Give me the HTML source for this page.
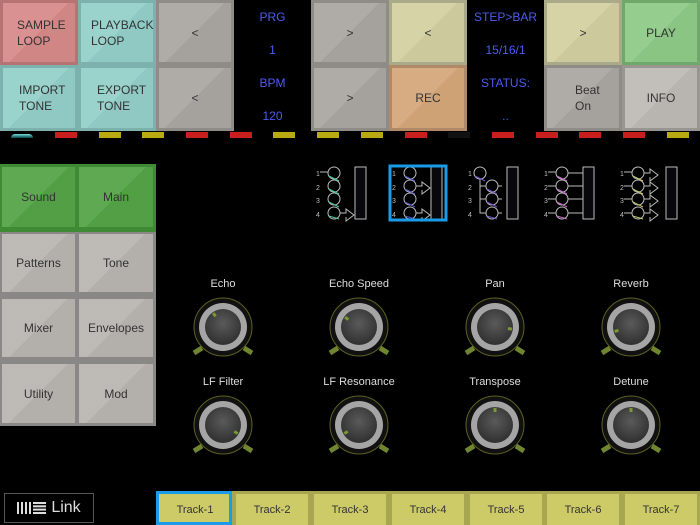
<!DOCTYPE html>
<html><head><meta charset="utf-8"><style>
*{margin:0;padding:0;box-sizing:border-box}
body{width:700px;height:525px;background:#000;position:relative;overflow:hidden;font-family:"Liberation Sans",sans-serif}
.c{position:absolute;display:flex;align-items:center;justify-content:center;text-align:center;font-size:12px;color:#333;line-height:16px}
.c>div{position:absolute;left:3px;top:3px;right:3px;bottom:3px;display:flex;align-items:center;justify-content:center;background-image:linear-gradient(135deg,rgba(255,255,255,.06) 50%,rgba(0,0,0,.03) 50%)}
.bl{position:absolute;color:#4b5cf0;font-size:12px;text-align:center}
.ind{position:absolute;top:132px;width:22px;height:6px}
.lab{position:absolute;color:#ddd;font-size:11px;text-align:center;width:120px}
.tr{position:absolute;top:491px;height:34px;width:78px;background:#a8a650;font-size:11px;color:#333}
.tr>div{position:absolute;left:3px;top:3px;right:3px;bottom:0;background:#cdca68;display:flex;align-items:center;justify-content:center}
</style></head><body>
<div class="c" style="left:0;top:0;width:78px;height:65px;background:#b77374"><div style="background-color:#d88a8a;justify-content:flex-start;padding-left:14px;text-align:left">SAMPLE<br>LOOP</div></div>
<div class="c" style="left:78px;top:0;width:78px;height:65px;background:#7cb1ae"><div style="background-color:#94cfc9;justify-content:flex-start;padding-left:10px;text-align:left">PLAYBACK<br>LOOP</div></div>
<div class="c" style="left:156px;top:0;width:78px;height:65px;background:#8f8c88"><div style="background-color:#aaa7a2">&lt;</div></div>
<div class="c" style="left:311px;top:0;width:78px;height:65px;background:#8f8c88"><div style="background-color:#aaa7a2">&gt;</div></div>
<div class="c" style="left:389px;top:0;width:78px;height:65px;background:#aaa98a"><div style="background-color:#d3d1a2">&lt;</div></div>
<div class="c" style="left:544px;top:0;width:78px;height:65px;background:#aaa98a"><div style="background-color:#d3d1a2">&gt;</div></div>
<div class="c" style="left:622px;top:0;width:78px;height:65px;background:#6fa86a"><div style="background-color:#8ecb88">PLAY</div></div>
<div class="c" style="left:0;top:65px;width:78px;height:66px;background:#7cb1ae"><div style="background-color:#94cfc9;justify-content:flex-start;padding-left:16px;text-align:left">IMPORT<br>TONE</div></div>
<div class="c" style="left:78px;top:65px;width:78px;height:66px;background:#7cb1ae"><div style="background-color:#94cfc9;justify-content:flex-start;padding-left:16px;text-align:left">EXPORT<br>TONE</div></div>
<div class="c" style="left:156px;top:65px;width:78px;height:66px;background:#8f8c88"><div style="background-color:#aaa7a2">&lt;</div></div>
<div class="c" style="left:311px;top:65px;width:78px;height:66px;background:#8f8c88"><div style="background-color:#aaa7a2">&gt;</div></div>
<div class="c" style="left:389px;top:65px;width:78px;height:66px;background:#b08a68"><div style="background-color:#d6a77a">REC</div></div>
<div class="c" style="left:544px;top:65px;width:78px;height:66px;background:#8f8c88"><div style="background-color:#aaa7a2;justify-content:flex-start;padding-left:28px;text-align:left">Beat<br>On</div></div>
<div class="c" style="left:622px;top:65px;width:78px;height:66px;background:#999691"><div style="background-color:#bebbb6">INFO</div></div>
<div class="bl" style="left:234px;top:10px;width:77px">PRG</div>
<div class="bl" style="left:234px;top:43px;width:77px">1</div>
<div class="bl" style="left:234px;top:76px;width:77px">BPM</div>
<div class="bl" style="left:234px;top:109px;width:77px">120</div>
<div class="bl" style="left:467px;top:10px;width:77px">STEP&gt;BAR</div>
<div class="bl" style="left:467px;top:43px;width:77px">15/16/1</div>
<div class="bl" style="left:467px;top:76px;width:77px">STATUS:</div>
<div class="bl" style="left:467px;top:109px;width:77px">..</div>
<div class="ind" style="left:11px;top:134px;height:4px;background:linear-gradient(#7dd,#044);border-radius:8px 8px 0 0"></div>
<div class="ind" style="left:55px;background:#c81e1e"></div>
<div class="ind" style="left:99px;background:#b8aa10"></div>
<div class="ind" style="left:142px;background:#b8aa10"></div>
<div class="ind" style="left:186px;background:#c81e1e"></div>
<div class="ind" style="left:230px;background:#c81e1e"></div>
<div class="ind" style="left:273px;background:#b8aa10"></div>
<div class="ind" style="left:317px;background:#b8aa10"></div>
<div class="ind" style="left:361px;background:#b8aa10"></div>
<div class="ind" style="left:405px;background:#c81e1e"></div>
<div class="ind" style="left:448px;background:#111"></div>
<div class="ind" style="left:492px;background:#c81e1e"></div>
<div class="ind" style="left:536px;background:#c81e1e"></div>
<div class="ind" style="left:579px;background:#c81e1e"></div>
<div class="ind" style="left:623px;background:#c81e1e"></div>
<div class="ind" style="left:667px;background:#b8aa10"></div>
<div style="position:absolute;left:0;top:164px;width:156px;height:262px;background:#8a8886"></div>
<div style="position:absolute;left:0;top:164px;width:156px;height:68px;background:#3f8a34"></div>
<div class="c" style="left:0;top:164px;width:78px;height:66px"><div style="background-color:#54a446;left:2px;top:3px">Sound</div></div>
<div class="c" style="left:78px;top:164px;width:78px;height:66px"><div style="background-color:#54a446;left:1px;top:3px">Main</div></div>
<div class="c" style="left:0;top:230px;width:78px;height:65px"><div style="background-color:#b9b6b2;left:2px;top:4px">Patterns</div></div>
<div class="c" style="left:78px;top:230px;width:78px;height:65px"><div style="background-color:#b9b6b2;left:1px;top:4px">Tone</div></div>
<div class="c" style="left:0;top:295px;width:78px;height:65px"><div style="background-color:#b9b6b2;left:2px;top:4px">Mixer</div></div>
<div class="c" style="left:78px;top:295px;width:78px;height:65px"><div style="background-color:#b9b6b2;left:1px;top:4px">Envelopes</div></div>
<div class="c" style="left:0;top:360px;width:78px;height:66px"><div style="background-color:#b9b6b2;left:2px;top:4px">Utility</div></div>
<div class="c" style="left:78px;top:360px;width:78px;height:66px"><div style="background-color:#b9b6b2;left:1px;top:4px">Mod</div></div>
<svg style="position:absolute;left:300px;top:155px" width="400" height="80" fill="none" stroke="#bbb" stroke-width="1">
<g>
 <rect x="55" y="12" width="11" height="52" fill="#08080c"/>
 <circle cx="34" cy="18" r="6"/><circle cx="34" cy="31" r="6"/><circle cx="34" cy="44" r="6"/><circle cx="34" cy="58" r="6"/>
 <path d="M20 17h8M40 58h6v-4l8 6-8 6v-4" /><path d="M29 21l10 5M29 34l10 5M29 47l10 5M29 61l10 3" stroke="#4c9"/>
 <text x="16" y="21" fill="#bbb" stroke="none" font-size="7">1</text><text x="16" y="35" fill="#bbb" stroke="none" font-size="7">2</text><text x="16" y="48" fill="#bbb" stroke="none" font-size="7">3</text><text x="16" y="62" fill="#bbb" stroke="none" font-size="7">4</text>
</g>
<g transform="translate(76,0)">
 <rect x="55" y="12" width="11" height="52" fill="#08080c"/>
 <circle cx="34" cy="18" r="6"/><circle cx="34" cy="31" r="6"/><circle cx="34" cy="44" r="6"/><circle cx="34" cy="58" r="6"/>
 <path d="M40 31h6v-4l8 6-8 6v-4M40 58h6v-4l8 6-8 6v-4"/><path d="M29 21l10 5M29 34l10 5M29 47l10 5M29 61l10 3" stroke="#55c"/>
 <text x="16" y="21" fill="#bbb" stroke="none" font-size="7">1</text><text x="16" y="35" fill="#bbb" stroke="none" font-size="7">2</text><text x="16" y="48" fill="#bbb" stroke="none" font-size="7">3</text><text x="16" y="62" fill="#bbb" stroke="none" font-size="7">4</text>
</g>
<rect x="90" y="11" width="56" height="54" stroke="#1a9be8" stroke-width="3"/>
<g transform="translate(152,0)">
 <rect x="55" y="12" width="11" height="52" fill="#08080c"/>
 <circle cx="28" cy="18" r="6"/><circle cx="40" cy="31" r="6"/><circle cx="40" cy="44" r="6"/><circle cx="40" cy="58" r="6"/>
 <path d="M28 24v34h6M28 31h6M28 44h6M46 31h4M46 44h4M46 58h4"/><path d="M23 21l10 5M35 34l10 5M35 47l10 5M35 61l10 3" stroke="#75c"/>
 <text x="16" y="21" fill="#bbb" stroke="none" font-size="7">1</text><text x="16" y="35" fill="#bbb" stroke="none" font-size="7">2</text><text x="16" y="48" fill="#bbb" stroke="none" font-size="7">3</text><text x="16" y="62" fill="#bbb" stroke="none" font-size="7">4</text>
</g>
<g transform="translate(228,0)">
 <rect x="55" y="12" width="11" height="52" fill="#08080c"/>
 <circle cx="34" cy="18" r="6"/><circle cx="34" cy="31" r="6"/><circle cx="34" cy="44" r="6"/><circle cx="34" cy="58" r="6"/>
 <path d="M20 17h8M20 31h8M20 44h8M20 58h8M40 18h15M40 31h15M40 44h15M40 58h15"/><path d="M29 21l10 5M29 34l10 5M29 47l10 5M29 61l10 3" stroke="#c6c"/>
 <text x="16" y="21" fill="#bbb" stroke="none" font-size="7">1</text><text x="16" y="35" fill="#bbb" stroke="none" font-size="7">2</text><text x="16" y="48" fill="#bbb" stroke="none" font-size="7">3</text><text x="16" y="62" fill="#bbb" stroke="none" font-size="7">4</text>
</g>
<g transform="translate(304,0)">
 <rect x="62" y="12" width="11" height="52" fill="#08080c"/>
 <circle cx="34" cy="18" r="6"/><circle cx="34" cy="31" r="6"/><circle cx="34" cy="44" r="6"/><circle cx="34" cy="58" r="6"/>
 <path d="M20 17h8M20 31h8M20 44h8M20 58h8M40 18h6v-4l8 6-8 6v-4M40 31h6v-4l8 6-8 6v-4M40 44h6v-4l8 6-8 6v-4M40 58h6v-4l8 6-8 6v-4"/><path d="M29 21l10 5M29 34l10 5M29 47l10 5M29 61l10 3" stroke="#cc6"/>
 <text x="16" y="21" fill="#bbb" stroke="none" font-size="7">1</text><text x="16" y="35" fill="#bbb" stroke="none" font-size="7">2</text><text x="16" y="48" fill="#bbb" stroke="none" font-size="7">3</text><text x="16" y="62" fill="#bbb" stroke="none" font-size="7">4</text>
</g>
</svg>
<div class="lab" style="left:163px;top:278px">Echo</div>
<div class="lab" style="left:299px;top:278px">Echo Speed</div>
<div class="lab" style="left:435px;top:278px">Pan</div>
<div class="lab" style="left:571px;top:278px">Reverb</div>
<div class="lab" style="left:163px;top:376px">LF Filter</div>
<div class="lab" style="left:299px;top:376px">LF Resonance</div>
<div class="lab" style="left:435px;top:376px">Transpose</div>
<div class="lab" style="left:571px;top:376px">Detune</div>
<svg style="position:absolute;left:0;top:0" width="700" height="525">
<defs>
<radialGradient id="g" cx="50%" cy="40%" r="60%"><stop offset="0" stop-color="#5a5a5a"/><stop offset="1" stop-color="#303030"/></radialGradient>
<g id="k">
 <circle r="29" fill="#111" stroke="#5c6020" stroke-width="1"/>
 <circle r="24" fill="#a5a5a5" stroke="none"/>
 <circle r="18" fill="url(#g)" stroke="none"/>
 <path d="M-21 21l-8 5M21 21l8 5" stroke="#6f8530" stroke-width="5"/>
</g>
</defs>
<use href="#k" x="223" y="327"/><use href="#k" x="359" y="327"/><use href="#k" x="495" y="327"/><use href="#k" x="631" y="327"/>
<use href="#k" x="223" y="425"/><use href="#k" x="359" y="425"/><use href="#k" x="495" y="425"/><use href="#k" x="631" y="425"/>
<g stroke="#7a9a30" stroke-width="3">
<line x1="0" y1="-13" x2="0" y2="-17" transform="translate(223,327) rotate(-35)"/>
<line x1="0" y1="-13" x2="0" y2="-17" transform="translate(359,327) rotate(-55)"/>
<line x1="0" y1="-13" x2="0" y2="-17" transform="translate(495,327) rotate(97)"/>
<line x1="0" y1="-13" x2="0" y2="-17" transform="translate(631,327) rotate(-105)"/>
<line x1="0" y1="-13" x2="0" y2="-17" transform="translate(223,425) rotate(120)"/>
<line x1="0" y1="-13" x2="0" y2="-17" transform="translate(359,425) rotate(-120)"/>
<line x1="0" y1="-13" x2="0" y2="-17" transform="translate(495,425)"/>
<line x1="0" y1="-13" x2="0" y2="-17" transform="translate(631,425)"/>
</g>
</svg>
<div style="position:absolute;left:4px;top:493px;width:90px;height:30px;border:1px solid #555;color:#ddd;font-size:16px;display:flex;align-items:center;justify-content:center;gap:4px">
<svg width="30" height="12"><g fill="#ddd"><rect x="0" y="0" width="2" height="12"/><rect x="4" y="0" width="2" height="12"/><rect x="8" y="0" width="2" height="12"/><rect x="12" y="0" width="2" height="12"/><rect x="16" y="0" width="13" height="2"/><rect x="16" y="3.3" width="13" height="2"/><rect x="16" y="6.6" width="13" height="2"/><rect x="16" y="10" width="13" height="2"/></g></svg>Link</div>
<div class="tr" style="left:156px"><div>Track-1</div></div>
<div style="position:absolute;left:156px;top:491px;width:76px;height:34px;border:3px solid #1a9be8"></div>
<div class="tr" style="left:233px"><div>Track-2</div></div>
<div class="tr" style="left:311px"><div>Track-3</div></div>
<div class="tr" style="left:389px"><div>Track-4</div></div>
<div class="tr" style="left:467px"><div>Track-5</div></div>
<div class="tr" style="left:544px"><div>Track-6</div></div>
<div class="tr" style="left:622px"><div>Track-7</div></div>
</body></html>
